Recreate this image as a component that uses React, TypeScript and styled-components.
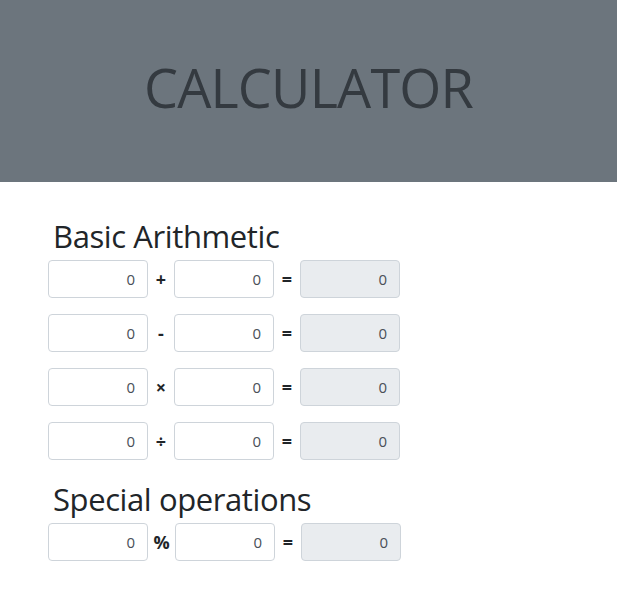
import React from "react";
import styled, { createGlobalStyle } from "styled-components";

const Global = createGlobalStyle`
  body { margin: 0; font-family: "Open Sans", "Segoe UI", sans-serif; color: #212529; background: #fff; }
  * { box-sizing: border-box; }
`;

const Header = styled.header`
  height: 182px;
  background: #6c757d;
  display: flex;
  align-items: center;
  justify-content: center;
`;

const Title = styled.h1`
  margin: 0;
  font-size: 54px;
  font-weight: 400;
  color: #343a40;
  letter-spacing: -0.8px;
  padding-bottom: 8px;
`;

const Main = styled.main`
  padding: 36px 0 0 48px;
`;

const Section = styled.section`
  margin-bottom: 21px;
`;

const Heading = styled.h2`
  margin: 0 0 6px 5px;
  font-size: 31px;
  font-weight: 400;
  line-height: 36px;
  letter-spacing: -0.4px;
`;

const Row = styled.div`
  display: flex;
  align-items: center;
  margin-bottom: 16px;
`;

const Input = styled.input<{ $disabled?: boolean }>`
  width: 100px;
  height: 38px;
  padding: 6px 12px;
  border: 1px solid #ced4da;
  border-radius: 4px;
  font-family: inherit;
  font-size: 15px;
  text-align: right;
  color: #495057;
  background: ${(p) => (p.$disabled ? "#e9ecef" : "#fff")};
`;

const Op = styled.span<{ $wide?: boolean }>`
  width: ${(p) => (p.$wide ? "27px" : "26px")};
  text-align: center;
  font-weight: 700;
  font-size: 18px;
  color: #212529;
`;

const ops = ["+", "-", "×", "÷"];

export default function App() {
  return (
    <>
      <Global />
      <Header>
        <Title>CALCULATOR</Title>
      </Header>
      <Main>
        <Section>
          <Heading>Basic Arithmetic</Heading>
          {ops.map((o) => (
            <Row key={o}>
              <Input readOnly value="0" />
              <Op>{o}</Op>
              <Input readOnly value="0" />
              <Op>=</Op>
              <Input readOnly $disabled value="0" disabled />
            </Row>
          ))}
        </Section>
        <Section>
          <Heading>Special operations</Heading>
          <Row>
            <Input readOnly value="0" />
            <Op $wide>%</Op>
            <Input readOnly value="0" />
            <Op>=</Op>
            <Input readOnly $disabled value="0" disabled />
          </Row>
        </Section>
      </Main>
    </>
  );
}
